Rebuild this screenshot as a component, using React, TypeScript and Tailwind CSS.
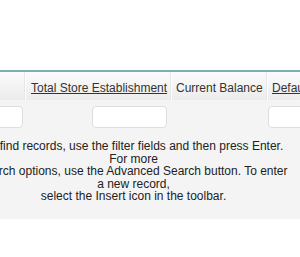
export default function App() {
  return (
    <div className="w-[300px] h-[257px] overflow-hidden bg-white font-['Liberation_Sans',Arial,sans-serif] text-[12px] text-[#333]">
      <div className="h-[70px]" />

      {/* grid */}
      <div className="-ml-[24px] w-[400px]">
        <div className="h-[2px] bg-[#7aafb5]" />

        {/* header row */}
        <div className="flex h-[28px] bg-gradient-to-b from-[#fbfbfb] to-[#ececec] leading-[14px]">
          <div className="w-[49px] border-r border-r-[#e6e6e6]" />
          <div className="w-[146px] border-r border-r-[#e6e6e6] border-l border-l-white pl-[5px] pt-[9px] whitespace-nowrap">
            <span className="underline">Total Store Establishment</span>
          </div>
          <div className="w-[96px] border-r border-r-[#e6e6e6] border-l border-l-white pl-[4px] pt-[9px] whitespace-nowrap">
            Current Balance
          </div>
          <div className="flex-1 border-l border-l-white pl-[4px] pt-[9px] whitespace-nowrap">
            <span className="underline">Default Account</span>
          </div>
        </div>

        {/* filter row */}
        <div className="flex h-[30px] bg-[#f4f4f4] pt-[6px]">
          <div className="w-[49px] flex justify-end pr-[2px]">
            <div className="w-[40px] h-[22px] rounded-[4px] border border-[#dedede] bg-white" />
          </div>
          <div className="w-[146px] flex justify-end pr-[4px]">
            <div className="w-[75px] h-[22px] rounded-[4px] border border-[#dedede] bg-white" />
          </div>
          <div className="w-[96px]" />
          <div className="flex-1 pl-[1px]">
            <div className="w-[80px] h-[22px] rounded-[4px] border border-[#dedede] bg-white" />
          </div>
        </div>
      </div>

      {/* empty message */}
      <div className="h-[89px] bg-[#f4f4f4] pt-[10px]">
        <div className="-ml-[24px] w-[315px] text-center leading-[12.5px] text-[#222]">
          To find records, use the filter fields and then press Enter. For more
          <br />
          search options, use the Advanced Search button. To enter a new record,
          <br />
          select the Insert icon in the toolbar.
        </div>
      </div>
    </div>
  )
}
